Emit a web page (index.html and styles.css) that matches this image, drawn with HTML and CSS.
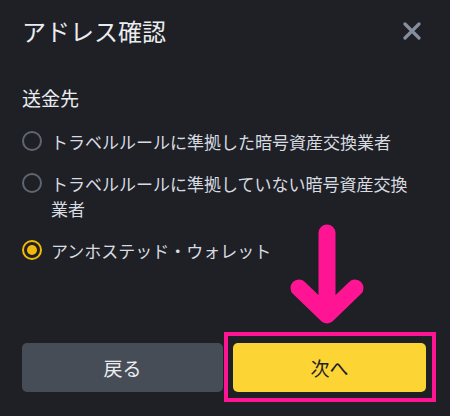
FILE: index.html
```html
<!DOCTYPE html>
<html lang="ja">
<head>
    <meta charset="UTF-8">
    <meta name="viewport" content="width=device-width, initial-scale=1.0">
    <title>アドレス確認</title>
    <link rel="stylesheet" href="styles.css">
</head>
<body>
    <div class="dialog">
        <div class="header">
            <h1>アドレス確認</h1>
            <button class="close" aria-label="閉じる">
                <svg width="18" height="18" viewBox="0 0 18 18">
                    <path d="M2 2L16 16M16 2L2 16" stroke="#848e9c" stroke-width="3.2" stroke-linecap="round"/>
                </svg>
            </button>
        </div>

        <h2 class="label">送金先</h2>

        <div class="options">
            <label class="option">
                <span class="radio"></span>
                <span class="text">トラベルルールに準拠した暗号資産交換業者</span>
            </label>
            <label class="option">
                <span class="radio"></span>
                <span class="text">トラベルルールに準拠していない暗号資産交換業者</span>
            </label>
            <label class="option">
                <span class="radio checked"></span>
                <span class="text">アンホステッド・ウォレット</span>
            </label>
        </div>

        <div class="actions">
            <button class="btn btn-back">戻る</button>
            <div class="highlight">
                <button class="btn btn-next">次へ</button>
            </div>
        </div>

        <!-- annotation arrow -->
        <svg class="pointer" width="80" height="110" viewBox="0 0 80 110">
            <path d="M39 12L39 94M11 67L39 94L67 67" fill="none" stroke="#ff1493" stroke-width="17" stroke-linecap="round" stroke-linejoin="round"/>
        </svg>
    </div>
</body>
</html>
```

FILE: styles.css
```css
body {
    margin: 0;
    background-color: #1e2026;
    font-family: "Noto Sans CJK JP", "Noto Sans", sans-serif;
    color: #eaecef;
}
.dialog {
    position: relative;
    height: 416px;
    padding: 0 24px 0 22px;
    box-sizing: border-box;
}
.header {
    display: flex;
    justify-content: space-between;
    align-items: center;
    padding-top: 11px;
}
h1 {
    margin: 0;
    font-size: 24px;
    font-weight: 400;
    line-height: 40px;
}
.close {
    background: none;
    border: none;
    padding: 0;
    margin-right: 5px;
    display: flex;
}
.label {
    margin: 33px 0 0;
    font-size: 19px;
    font-weight: 400;
    line-height: 28px;
}
.options {
    display: flex;
    flex-direction: column;
    gap: 17px;
    margin-top: 17px;
}
.option {
    display: flex;
    align-items: flex-start;
    gap: 9px;
    font-size: 17px;
    line-height: 25px;
    color: #d8dbe0;
}
.radio {
    flex: none;
    width: 16px;
    height: 16px;
    margin-top: 2px;
    border: 2px solid #5e6673;
    border-radius: 50%;
    position: relative;
}
.radio.checked {
    border-color: #f0b90b;
}
.radio.checked::after {
    content: "";
    position: absolute;
    left: 3px;
    top: 3px;
    width: 10px;
    height: 10px;
    border-radius: 50%;
    background-color: #f0b90b;
}
.text {
    padding-right: 10px;
}
.actions {
    display: grid;
    grid-template-columns: 201px 193px;
    gap: 10px;
    position: absolute;
    left: 22px;
    top: 343px;
}
.btn {
    width: 100%;
    height: 49px;
    border: none;
    border-radius: 5px;
    font-family: inherit;
    font-size: 19px;
}
.btn-back {
    background-color: #474d57;
    color: #eaecef;
}
.btn-next {
    display: block;
    background-color: #fcd535;
    color: #1e2026;
}
.highlight {
    position: relative;
}
.highlight::before {
    content: "";
    position: absolute;
    left: -9px;
    right: -10px;
    top: -11px;
    bottom: -10px;
    border: 4px solid #ff1493;
}
.pointer {
    position: absolute;
    left: 288px;
    top: 221px;
}
```
